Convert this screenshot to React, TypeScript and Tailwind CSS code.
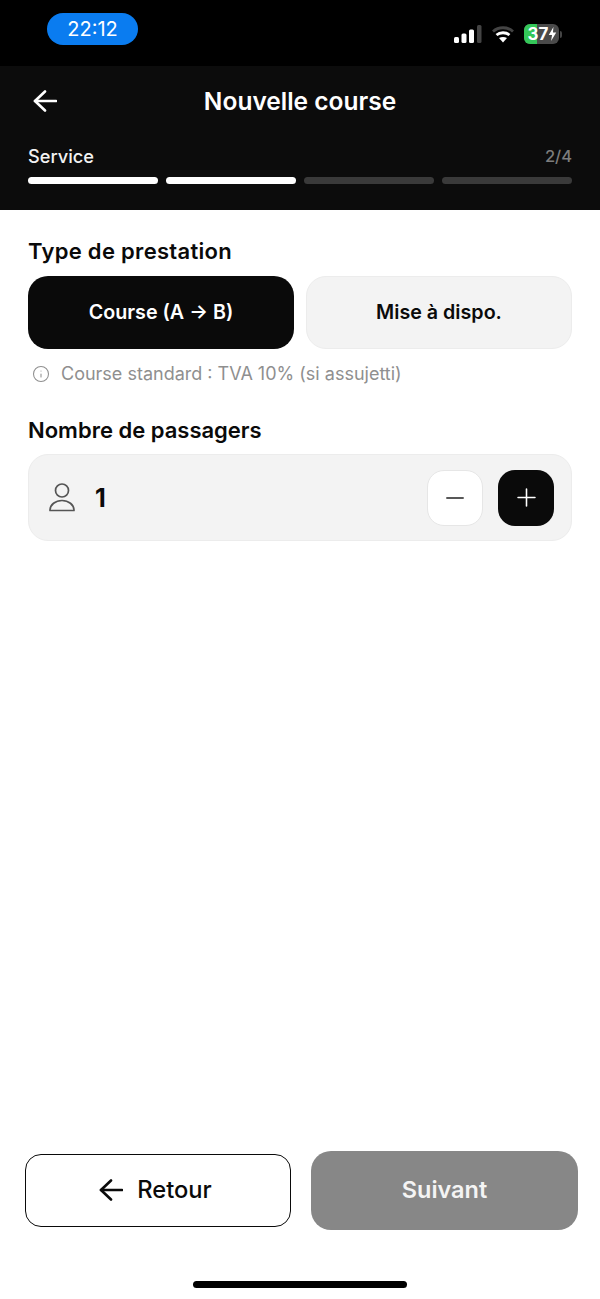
import React from 'react';
import { Info, Minus, Plus } from 'lucide-react';

const font = { fontFamily: 'Inter, sans-serif' };

function BackArrow({ className }: { className?: string }) {
  return (
    <svg className={className} width="24" height="22" viewBox="0 0 24 22" fill="none" stroke="currentColor" strokeWidth="2.6" strokeLinecap="round" strokeLinejoin="round">
      <path d="M2 11H23" />
      <path d="M12 1.500L2 11L12 20.500" />
    </svg>
  );
}

function StatusBar() {
  return (
    <div className="flex h-[66px] items-start justify-between bg-black pl-[47px] pr-[38px] pt-[13px]">
      <div className="flex h-[32px] w-[91px] items-center justify-center rounded-full bg-[#0a7cf0] text-[20px] font-normal text-white">
        22:12
      </div>
      <div className="mt-[11px] flex h-[20px] items-center gap-[10px]">
        <svg width="28" height="18" viewBox="0 0 28 18">
          <rect x="0" y="12" width="5" height="6" rx="1.500" fill="#fff" />
          <rect x="7.500" y="8.500" width="5" height="9.500" rx="1.500" fill="#fff" />
          <rect x="15" y="4.500" width="5" height="13.500" rx="1.500" fill="#fff" />
          <rect x="23" y="0" width="4.500" height="18" rx="1.500" fill="#444" />
        </svg>
        <svg width="22" height="17" viewBox="0 0 22 17" fill="none">
          <path d="M1 5.500C6.500 0.500 15.500 0.500 21 5.500" stroke="#444" strokeWidth="2.800" />
          <path d="M4.500 9C8 6 14 6 17.500 9" stroke="#fff" strokeWidth="2.800" />
          <path d="M11 16.500L7 12C9.500 10.500 12.500 10.500 15 12Z" fill="#fff" />
        </svg>
        <div className="flex items-center gap-[1px]">
          <div className="relative flex h-[20px] w-[35px] items-center justify-center overflow-hidden rounded-[6px] bg-[#4a4a4a] text-[17px] font-bold leading-none text-white">
            <div className="absolute inset-y-0 left-0 w-[13px] bg-[#34c759]" />
            <span className="relative -ml-[7px]">37</span>
            <svg className="absolute right-[2px]" width="9" height="14" viewBox="0 0 9 15">
              <path d="M5.500 0L0.500 8.500H4L3 15L8.500 6H5Z" fill="#fff" />
            </svg>
          </div>
          <div className="h-[7px] w-[2px] rounded-r-full bg-[#444]" />
        </div>
      </div>
    </div>
  );
}

function Header() {
  return (
    <div className="flex h-[144px] flex-col bg-[#0c0c0c] px-[28px]">
      <div className="relative flex h-[70px] items-center justify-center">
        <BackArrow className="absolute left-[5px] text-white" />
        <div className="text-[24.5px] font-semibold text-white">Nouvelle course</div>
      </div>
      <div className="mt-[8px] flex items-center justify-between leading-[24px]">
        <span className="text-[18.2px] font-medium text-[#f2f2f2]">Service</span>
        <span className="text-[16.5px] font-medium text-[#7d7d7d]">2/4</span>
      </div>
      <div className="mt-[9px] flex gap-[8px]">
        <div className="h-[7px] flex-1 rounded-full bg-white" />
        <div className="h-[7px] flex-1 rounded-full bg-white" />
        <div className="h-[7px] flex-1 rounded-full bg-[#3a3a3a]" />
        <div className="h-[7px] flex-1 rounded-full bg-[#3a3a3a]" />
      </div>
    </div>
  );
}

export default function App() {
  return (
    <div className="flex h-[1299px] w-[600px] flex-col overflow-hidden bg-white" style={font}>
      <StatusBar />
      <Header />

      <div className="flex flex-1 flex-col px-[28px] pt-[26px]">
        <h2 className="text-[22px] font-semibold leading-[30px] tracking-[0.3px] text-[#0a0a0a]">Type de prestation</h2>
        <div className="mt-[10px] grid grid-cols-2 gap-[12px]">
          <button className="h-[73px] rounded-[20px] bg-[#0a0a0a] pt-[1px] text-[19.7px] font-semibold text-white">
            Course (A → B)
          </button>
          <button className="h-[73px] rounded-[20px] border border-[#ececec] bg-[#f3f3f3] pt-[1px] text-[19.7px] font-semibold text-[#0a0a0a]">
            Mise à dispo.
          </button>
        </div>
        <div className="mt-[12px] flex items-center gap-[11px] pl-[4px] text-[18px] leading-[26px] text-[#8f8f8f]">
          <Info size={18} strokeWidth={1.4} />
          <span>Course standard : TVA 10% (si assujetti)</span>
        </div>

        <h2 className="mt-[28px] text-[22px] font-semibold leading-[30px] text-[#0a0a0a]">Nombre de passagers</h2>
        <div className="mt-[9px] flex h-[87px] items-center rounded-[20px] border border-[#ececec] bg-[#f3f3f3] pl-[20px] pr-[17px]">
          <svg width="26" height="29" viewBox="0 0 26 29" fill="none" stroke="#555" strokeWidth="1.700">
            <circle cx="13" cy="7.500" r="6.500" />
            <path d="M1 27.500C1 21.500 6.500 17.500 13 17.500C19.500 17.500 25 21.500 25 27.500Z" strokeLinejoin="round" />
          </svg>
          <span className="ml-[20px] pt-[2px] text-[25px] font-bold text-[#0a0a0a]">1</span>
          <button className="ml-auto flex h-[56px] w-[56px] items-center justify-center rounded-[17px] border border-[#e6e6e6] bg-white">
            <Minus size={28} strokeWidth={1.3} className="text-[#222]" />
          </button>
          <button className="ml-[15px] flex h-[56px] w-[56px] items-center justify-center rounded-[17px] bg-[#0a0a0a]">
            <Plus size={29} strokeWidth={1.3} className="text-white" />
          </button>
        </div>

        <div className="-ml-[3px] -mr-[6px] mt-auto flex items-center gap-[20px]">
          <button className="flex h-[73px] w-[266px] shrink-0 items-center justify-center gap-[14px] rounded-[16px] border-[1.5px] border-[#0a0a0a] bg-white pb-[1px] pr-[5px] text-[23.7px] font-medium text-[#0a0a0a]">
            <BackArrow />
            Retour
          </button>
          <button className="h-[79px] w-[267px] shrink-0 rounded-[20px] bg-[#878787] pb-[2px] text-[23.5px] font-semibold text-[#f4f4f4]">
            Suivant
          </button>
        </div>

        <div className="flex h-[69px] items-start justify-center pt-[51px]">
          <div className="h-[7px] w-[214px] rounded-full bg-black" />
        </div>
      </div>
    </div>
  );
}
